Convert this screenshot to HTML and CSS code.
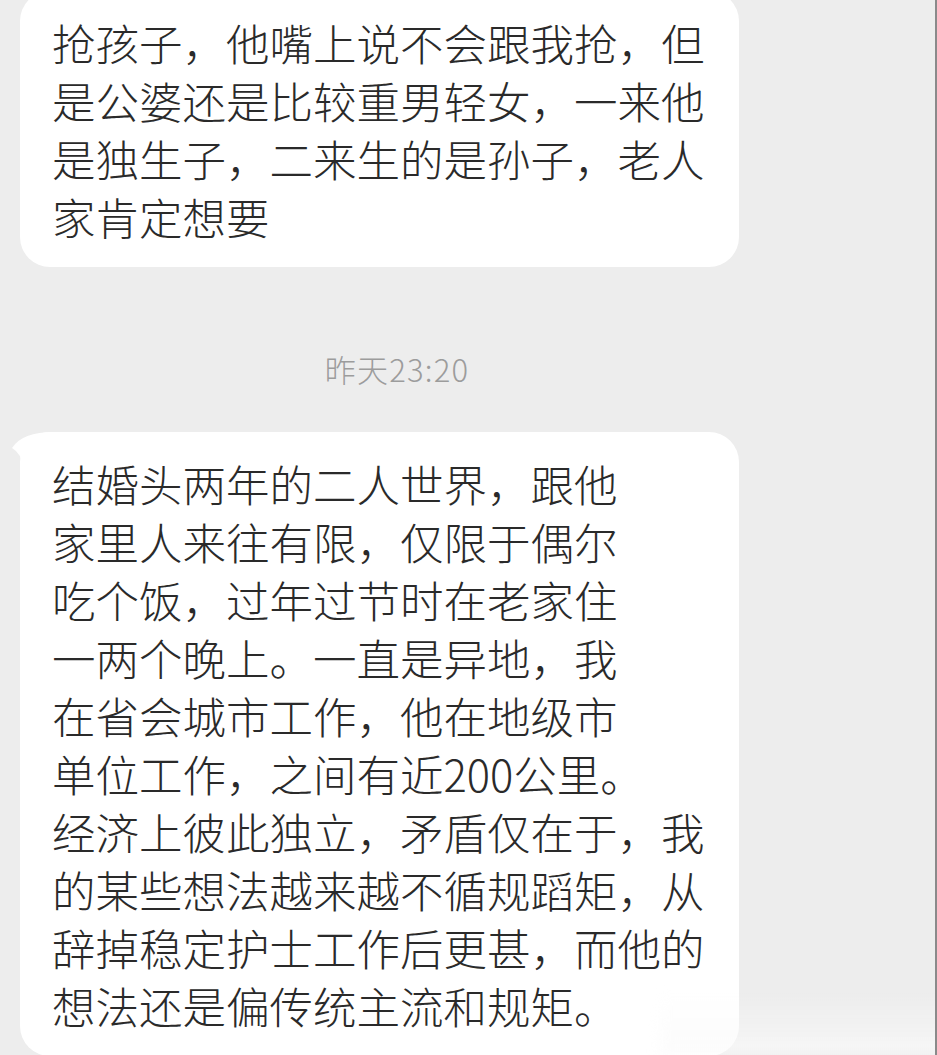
FILE: index.html
```html
<!DOCTYPE html>
<html lang="zh-CN">
<head>
<meta charset="utf-8">
<link rel="stylesheet" href="styles.css">
</head>
<body>
<div class="screen">
  <div class="chat">
    <div class="bubble bubble-first">
      <p class="msg">抢孩子，他嘴上说不会跟我抢，但<br>是公婆还是比较重男轻女，一来他<br>是独生子，二来生的是孙子，老人<br>家肯定想要</p>
    </div>
    <div class="time">昨天23:20</div>
    <div class="bubble bubble-tail">
      <svg class="tail" width="44" height="44" viewBox="0 0 44 44"><path d="M44 0 L44 44 L12 44 L12 34 Q12 22 2 16 Q12 0 44 0 Z" fill="#ffffff"/></svg>
      <p class="msg">结婚头两年的二人世界，跟他<br>家里人来往有限，仅限于偶尔<br>吃个饭，过年过节时在老家住<br>一两个晚上。一直是异地，我<br>在省会城市工作，他在地级市<br>单位工作，之间有近200公里。<br>经济上彼此独立，矛盾仅在于，我<br>的某些想法越来越不循规蹈矩，从<br>辞掉稳定护士工作后更甚，而他的<br>想法还是偏传统主流和规矩。</p>
    </div>
  </div>
  <div class="fade"></div>
</div>
</body>
</html>
```

FILE: styles.css
```css
html, body {
  margin: 0;
  padding: 0;
  background: #ededed;
}
body {
  overflow: hidden;
  font-family: "Noto Sans CJK SC", "Noto Sans", sans-serif;
}
.screen {
  position: relative;
  width: 935px;
  height: 1055px;
  border-right: 2px solid #8a8a8a;
  overflow: hidden;
}
.chat {
  display: flex;
  flex-direction: column;
  align-items: flex-start;
  padding-left: 20px;
}
.bubble {
  position: relative;
  width: 719px;
  box-sizing: border-box;
  background: #ffffff;
  border-radius: 30px;
  padding: 23px 20px 21px 32px;
}
.bubble-first {
  margin-top: -9px;
}
.msg {
  margin: 0;
  font-size: 43.5px;
  font-weight: 300;
  line-height: 58px;
  color: #2a2a2a;
  white-space: nowrap;
}
.time {
  width: 754px;
  text-align: center;
  margin: 82px 0 43px;
  font-size: 31px;
  font-weight: 300;
  line-height: 40px;
  letter-spacing: 1.2px;
  color: #9c9c9c;
}
.tail {
  position: absolute;
  left: -10px;
  top: 0;
  display: block;
}
.fade {
  position: absolute;
  left: 660px;
  bottom: 0;
  width: 300px;
  height: 62px;
  background: linear-gradient(to bottom, rgba(255,255,255,0), rgba(250,250,250,0.75));
  filter: blur(6px);
}
```
